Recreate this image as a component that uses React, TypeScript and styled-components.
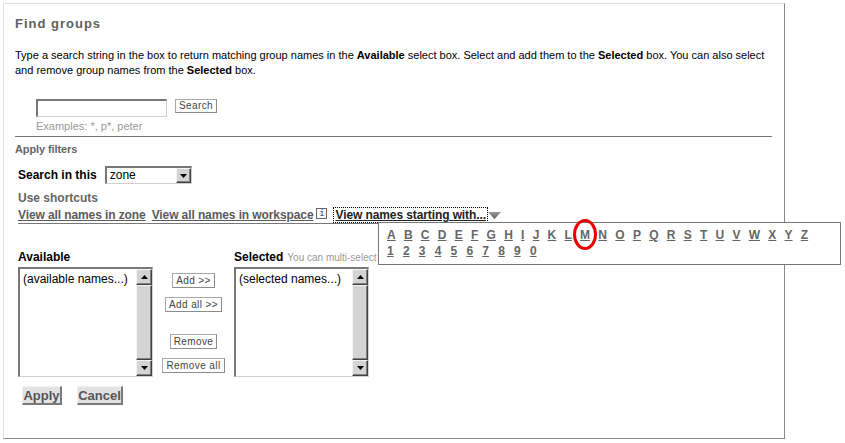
import React from 'react';
import styled, { createGlobalStyle } from 'styled-components';

const GlobalStyle = createGlobalStyle`
  html, body { margin: 0; padding: 0; background: #fff; }
  body { font-family: "Liberation Sans", Arial, sans-serif; font-size: 11px; color: #000; }
`;

const Panel = styled.div`
  box-sizing: border-box;
  margin: 3px 0 0 3px;
  width: 782px;
  height: 436px;
  border-top: 1px solid #dedede;
  border-left: 1px solid #dedede;
  border-right: 1px solid #8a8a8a;
  border-bottom: 1px solid #8a8a8a;
  padding: 12px 12px 0 11px;
`;

const Title = styled.h1`
  margin: 0;
  font-size: 13px;
  line-height: 16px;
  font-weight: bold;
  color: #606060;
  letter-spacing: 1px;
`;

const Intro = styled.p`
  margin: 16px 0 0 0;
  font-size: 11px;
  line-height: 15px;
  color: #000;
  b { font-weight: bold; }
`;

const SearchRow = styled.div`
  margin: 21px 0 0 21px;
  display: flex;
  align-items: flex-start;
`;

const TextInput = styled.input`
  box-sizing: border-box;
  width: 131px;
  height: 18px;
  margin: 0;
  padding: 0 3px;
  border-style: solid;
  border-width: 2px 1px 1px 2px;
  border-color: #777 #d0d0d0 #d0d0d0 #777;
  background: #fff;
  font-family: inherit;
  font-size: 11px;
  outline: none;
`;

const SmallButton = styled.button<{ $top?: number }>`
  box-sizing: border-box;
  height: 15px;
  margin: ${(p) => p.$top ?? 0}px 0 0 0;
  padding: 0 3px;
  border: 1px solid #a8a8a8;
  border-right-color: #8c8c8c;
  border-bottom-color: #8c8c8c;
  background: #fff;
  color: #444;
  font-family: "Liberation Sans", Arial, sans-serif;
  font-size: 10px;
  letter-spacing: 0.4px;
  line-height: 13px;
  white-space: nowrap;
  cursor: pointer;
`;

const SearchButton = styled(SmallButton)`
  margin-left: 8px;
  height: 14px;
  line-height: 12px;
`;

const Hint = styled.div`
  margin: 3px 0 0 21px;
  font-size: 11px;
  line-height: 13px;
  color: #999;
`;

const Rule = styled.div`
  margin-top: 3px;
  border-top: 1px solid #777;
`;

const SectionHead = styled.div`
  margin-top: 6px;
  font-size: 11px;
  line-height: 13px;
  font-weight: bold;
  color: #666;
  letter-spacing: -0.1px;
`;

const FilterRow = styled.div`
  margin: 10px 0 0 3px;
  display: flex;
  align-items: center;
  gap: 8px;
`;

const FieldLabel = styled.span`
  font-size: 12px;
  line-height: 14px;
  font-weight: bold;
  color: #000;
`;

const Select = styled.div`
  box-sizing: border-box;
  width: 87px;
  height: 18px;
  display: flex;
  border-style: solid;
  border-width: 2px 1px 1px 2px;
  border-color: #777 #d0d0d0 #d0d0d0 #777;
  background: #fff;
`;

const SelectValue = styled.span`
  flex: 1;
  padding-left: 3px;
  font-size: 12px;
  line-height: 14px;
  color: #000;
`;

const BevelBox = styled.span`
  box-sizing: border-box;
  display: flex;
  align-items: center;
  justify-content: center;
  background: #d4d4d4;
  border-style: solid;
  border-width: 1px;
  border-color: #f4f4f4 #404040 #404040 #f4f4f4;
  box-shadow: inset -1px -1px 0 #808080;
`;

const DropButton = styled(BevelBox)`
  width: 15px;
  height: 15px;
`;

const ShortcutsHead = styled(FieldLabel)`
  display: block;
  margin: 7px 0 0 3px;
  color: #666;
`;

const LinksRow = styled.div`
  position: relative;
  margin: 3px 0 0 3px;
  padding-bottom: 1px;
  height: 14px;
  display: flex;
  align-items: center;
  border-bottom: 1px solid #777;
`;

const Link = styled.a<{ $gap?: number; $dark?: boolean }>`
  margin-right: ${(p) => p.$gap ?? 0}px;
  font-size: 12px;
  line-height: 14px;
  font-weight: bold;
  letter-spacing: -0.1px;
  color: ${(p) => (p.$dark ? '#222' : '#5a5a5a')};
  text-decoration: underline;
  white-space: nowrap;
  cursor: pointer;
`;

const MenuLink = styled(Link)`
  outline: 1px dotted #000;
  outline-offset: 0;
  padding: 0 1px;
`;

const InfoIcon = styled.span`
  box-sizing: border-box;
  width: 11px;
  height: 11px;
  margin: -3px 7px 0 3px;
  border: 1px solid #666;
  display: flex;
  align-items: center;
  justify-content: center;
  font-family: "DejaVu Sans Mono", monospace;
  font-size: 9px;
  line-height: 9px;
  color: #333;
`;

const Popup = styled.div`
  position: absolute;
  left: 360px;
  top: 14px;
  z-index: 2;
  box-sizing: border-box;
  width: 463px;
  height: 43px;
  padding: 4px 0 0 8px;
  background: #fff;
  border: 1px solid #777;
`;

const LetterRow = styled.div`
  display: flex;
  height: 16px;
`;

const Letter = styled.a<{ $gap: number }>`
  margin-right: ${(p) => p.$gap}px;
  flex: none;
  font-size: 12px;
  line-height: 16px;
  font-weight: bold;
  color: #666;
  text-decoration: underline;
  cursor: pointer;
`;

const Highlight = styled.span`
  position: absolute;
  left: 194px;
  top: -4px;
  box-sizing: border-box;
  width: 24px;
  height: 31px;
  border: 3px solid #ee0000;
  border-radius: 50%;
  pointer-events: none;
`;

const ListsArea = styled.div`
  margin: 26px 0 0 3px;
  display: flex;
  align-items: flex-start;
`;

const ListColumn = styled.div`
  display: flex;
  flex-direction: column;
  width: 135px;
`;

const ListLabel = styled.div`
  height: 14px;
  font-size: 12px;
  line-height: 14px;
  font-weight: bold;
  color: #000;
  white-space: nowrap;
`;

const ListNote = styled.span`
  margin-left: 4px;
  font-size: 10px;
  font-weight: normal;
  color: #999;
`;

const ListBox = styled.div`
  box-sizing: border-box;
  margin-top: 3px;
  width: 135px;
  height: 110px;
  display: flex;
  border-style: solid;
  border-width: 2px 1px 1px 2px;
  border-color: #777 #d0d0d0 #d0d0d0 #777;
  background: #fff;
`;

const ListText = styled.div`
  flex: 1;
  padding: 3px 0 0 3px;
  font-size: 12px;
  line-height: 14px;
  color: #000;
  white-space: nowrap;
`;

const ScrollBar = styled.div`
  width: 16px;
  display: flex;
  flex-direction: column;
  background: #e8e8e8;
`;

const ScrollButton = styled(BevelBox)`
  width: 16px;
  height: 16px;
`;

const ScrollThumb = styled(BevelBox)`
  flex: 1;
`;

const MoveColumn = styled.div`
  width: 81px;
  padding-top: 23px;
  display: flex;
  flex-direction: column;
  align-items: center;
`;

const Footer = styled.div`
  margin: 9px 0 0 7px;
  display: flex;
  gap: 15px;
`;

const FormButton = styled.button<{ $w: number }>`
  box-sizing: border-box;
  width: ${(p) => p.$w}px;
  height: 19px;
  padding: 0;
  background: #e2e2e2;
  border-style: solid;
  border-width: 1px 2px 2px 1px;
  border-color: #f2f2f2 #7a7a7a #7a7a7a #f2f2f2;
  color: #555;
  font-family: "Liberation Sans Narrow", "Liberation Sans", Arial, sans-serif;
  font-size: 13px;
  font-weight: bold;
  line-height: 15px;
  cursor: pointer;
`;

const Triangle = ({ dir, color = '#000', w = 7, h = 4 }: { dir: 'up' | 'down'; color?: string; w?: number; h?: number }) => (
  <svg width={w} height={h} viewBox={`0 0 ${w} ${h}`}>
    <polygon
      points={dir === 'down' ? `0,0 ${w},0 ${w / 2},${h}` : `0,${h} ${w},${h} ${w / 2},0`}
      fill={color}
    />
  </svg>
);

const MenuArrow = () => (
  <svg width="13" height="7" viewBox="0 0 13 7" style={{ marginLeft: 1, marginTop: 1 }}>
    <defs>
      <linearGradient id="ma" x1="0" y1="0" x2="0" y2="1">
        <stop offset="0" stopColor="#9a9a9a" />
        <stop offset="1" stopColor="#5a5a5a" />
      </linearGradient>
    </defs>
    <polygon points="0,0 13,0 6.5,7" fill="url(#ma)" />
  </svg>
);

const LETTERS = 'ABCDEFGHIJKLMNOPQRSTUVWXYZ'.split('');
const DIGITS = '1234567890'.split('');

const List = ({ text }: { text: string }) => (
  <ListBox>
    <ListText>{text}</ListText>
    <ScrollBar>
      <ScrollButton>
        <Triangle dir="up" />
      </ScrollButton>
      <ScrollThumb />
      <ScrollButton>
        <Triangle dir="down" />
      </ScrollButton>
    </ScrollBar>
  </ListBox>
);

export default function App() {
  return (
    <>
      <GlobalStyle />
      <Panel>
        <Title>Find groups</Title>
        <Intro>
          Type a search string in the box to return matching group names in the <b>Available</b> select box. Select and
          add them to the <b>Selected</b> box. You can also select and remove group names from the <b>Selected</b> box.
        </Intro>
        <SearchRow>
          <TextInput type="text" />
          <SearchButton>Search</SearchButton>
        </SearchRow>
        <Hint>Examples: *, p*, peter</Hint>
        <Rule />
        <SectionHead>Apply filters</SectionHead>
        <FilterRow>
          <FieldLabel>Search in this</FieldLabel>
          <Select>
            <SelectValue>zone</SelectValue>
            <DropButton>
              <Triangle dir="down" />
            </DropButton>
          </Select>
        </FilterRow>
        <ShortcutsHead>Use shortcuts</ShortcutsHead>
        <LinksRow>
          <Link $gap={6}>View all names in zone</Link>
          <Link>View all names in workspace</Link>
          <InfoIcon>i</InfoIcon>
          <MenuLink $dark>View names starting with...</MenuLink>
          <MenuArrow />
          <Popup>
            <LetterRow>
              {LETTERS.map((l) => (
                <Letter key={l} $gap={8.25}>
                  {l}
                </Letter>
              ))}
            </LetterRow>
            <LetterRow>
              {DIGITS.map((d) => (
                <Letter key={d} $gap={9.2}>
                  {d}
                </Letter>
              ))}
            </LetterRow>
            <Highlight />
          </Popup>
        </LinksRow>
        <ListsArea>
          <ListColumn>
            <ListLabel>Available</ListLabel>
            <List text="(available names...)" />
          </ListColumn>
          <MoveColumn>
            <SmallButton>Add &gt;&gt;</SmallButton>
            <SmallButton $top={9}>Add all &gt;&gt;</SmallButton>
            <SmallButton $top={22}>Remove</SmallButton>
            <SmallButton $top={9}>Remove all</SmallButton>
          </MoveColumn>
          <ListColumn>
            <ListLabel>
              Selected<ListNote>You can multi-select using Ctrl or Shift.</ListNote>
            </ListLabel>
            <List text="(selected names...)" />
          </ListColumn>
        </ListsArea>
        <Footer>
          <FormButton $w={40}>Apply</FormButton>
          <FormButton $w={46}>Cancel</FormButton>
        </Footer>
      </Panel>
    </>
  );
}
